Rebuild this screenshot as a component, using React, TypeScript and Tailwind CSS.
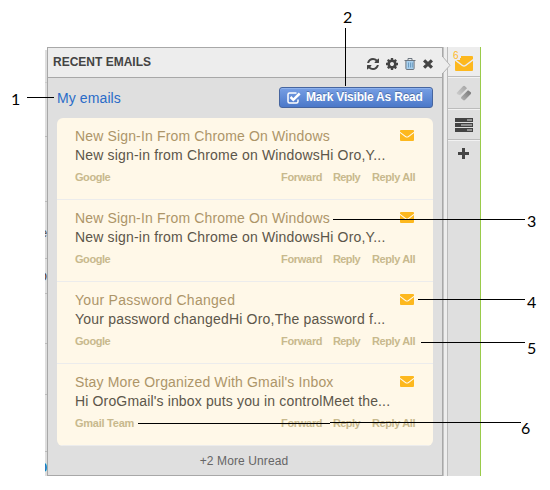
import type { ReactNode } from "react";

type Email = { subject: string; body: string; from: string; subjectSpacing: string; bodySpacing: string; fromSpacing: string };

const signIn: Email = {
  subject: "New Sign-In From Chrome On Windows",
  body: "New sign-in from Chrome on WindowsHi Oro,Y...",
  from: "Google",
  subjectSpacing: "tracking-[0.15px]",
  bodySpacing: "tracking-[0.18px]",
  fromSpacing: "tracking-[-0.45px]",
};

const emails: Email[] = [
  signIn,
  signIn,
  { subject: "Your Password Changed", body: "Your password changedHi Oro,The password f...", from: "Google", subjectSpacing: "tracking-[0.28px]", bodySpacing: "tracking-[0.2px]", fromSpacing: "tracking-[-0.45px]" },
  { subject: "Stay More Organized With Gmail's Inbox", body: "Hi OroGmail's inbox puts you in controlMeet the...", from: "Gmail Team", subjectSpacing: "tracking-[0.16px]", bodySpacing: "tracking-[0.15px]", fromSpacing: "tracking-[-0.25px]" },
];

function Envelope({ className }: { className: string }) {
  return (
    <svg className={className} viewBox="0 0 14 11" preserveAspectRatio="none" fill="#fdb81e">
      <path d="M1 0h12q1 0 1 1v.7L8.3 6q-1.3 1-2.600 0L0 1.700V1Q0 0 1 0z" />
      <path d="M0 3l5.200 3.900q1.800 1.300 3.600 0L14 3v7q0 1-1 1H1q-1 0-1-1z" />
    </svg>
  );
}

function RefreshIcon() {
  return (
    <svg className="h-[14px] w-[14px]" viewBox="0 0 1792 1792" fill="#444">
      <path d="M1639 1056q0 5-1 7-64 268-268 434.5t-478 166.5q-146 0-282.5-55t-243.5-157l-129 129q-19 19-45 19t-45-19-19-45v-448q0-26 19-45t45-19h448q26 0 45 19t19 45-19 45l-137 137q71 66 161 102t187 36q134 0 250-65t186-179q11-17 53-117 8-23 30-23h192q13 0 22.5 9.5t9.5 22.5zm25-800v448q0 26-19 45t-45 19h-448q-26 0-45-19t-19-45 19-45l138-138q-148-137-349-137-134 0-250 65t-186 179q-11 17-53 117-8 23-30 23h-199q-13 0-22.5-9.5t-9.5-22.5v-7q65-268 270-434.5t480-166.5q146 0 284 55.5t245 156.5l130-129q19-19 45-19t45 19 19 45z" />
    </svg>
  );
}

function GearIcon() {
  return (
    <svg className="h-[14px] w-[14px]" viewBox="0 0 1792 1792" fill="#444">
      <path d="M1152 896q0-106-75-181t-181-75-181 75-75 181 75 181 181 75 181-75 75-181zm512-109v222q0 12-8 23t-20 13l-185 28q-19 54-39 91 35 50 107 138 10 12 10 25t-9 23q-27 37-99 108t-94 71q-12 0-26-9l-138-108q-44 23-91 38-16 136-29 186-7 28-36 28h-222q-14 0-24.5-8.5t-11.5-21.5l-28-184q-49-16-90-37l-141 107q-10 9-25 9-14 0-25-11-126-114-165-168-7-10-7-23 0-12 8-23 15-21 51-66.5t54-70.5q-27-50-41-99l-183-27q-13-2-21-12.5t-8-23.5v-222q0-12 8-23t19-13l186-28q14-46 39-92-40-57-107-138-10-12-10-24 0-10 9-23 26-36 98.5-107.5t94.5-71.5q13 0 26 10l138 107q44-23 91-38 16-136 29-186 7-28 36-28h222q14 0 24.5 8.5t11.5 21.5l28 184q49 16 90 37l142-107q9-9 24-9 13 0 25 10 129 119 165 170 7 8 7 22 0 12-8 23-15 21-51 66.5t-54 70.5q26 50 41 98l183 28q13 2 21 12.5t8 23.5z" />
    </svg>
  );
}

function TrashIcon() {
  return (
    <svg className="h-[12px] w-[12px]" viewBox="0 0 12 12" fill="none">
      <path d="M2 2.500h8v9H2z" fill="#a9d0ee" />
      <path d="M.5 2.500h11M4 2.300V.5h4v1.800M1.900 3v7.500q0 1 1 1h6.200q1 0 1-1V3" stroke="#6c7680" />
      <path d="M4.500 4.500v5M6.500 4.500v5M8.300 4.500v5" stroke="#5d8fb8" strokeWidth=".8" />
    </svg>
  );
}

function CloseIcon() {
  return (
    <svg className="h-[10px] w-[10px]" viewBox="0 0 10 10" fill="none" stroke="#444" strokeWidth="3.200">
      <path d="M1.100 1.300l7.800 7.400M8.900 1.300L1.100 8.700" />
    </svg>
  );
}

function SideCell({ children, height }: { children: ReactNode; height: string }) {
  return <div className={`${height} flex w-8 items-center justify-center border-b border-[#bcbcbc] shadow-[0_1px_0_#f2f2f2]`}>{children}</div>;
}

export default function App() {
  return (
    <div className="relative h-[490px] w-[550px] overflow-hidden bg-white pt-[47px] pl-[45px] font-['Liberation_Sans',Arial,sans-serif]">
      <div className="flex h-[429px]">
        {/* edge of the page underneath the panel */}
        <div className="mt-[3px] flex w-[2px] flex-col overflow-hidden bg-[#dedede] text-[13px] leading-none">
          <div className="h-[33px] border-b border-[#ccc]" />
          <div className="h-[54px] border-b border-[#bbb]" />
          <div className="h-[65px] border-b border-[#bbb]" />
          <div className="h-[57px] border-b border-[#bbb] pt-[24px]"><span className="-ml-[5px] text-[#555]">e</span></div>
          <div className="h-[35px] border-b border-[#bbb] pt-[11px]"><span className="-ml-[8px] text-[#543]">O</span></div>
          <div className="h-[50px] border-b border-[#bbb]" />
          <div className="h-[51px] border-b border-[#bbb]" />
          <div className="h-[57px] border-b border-[#bbb]" />
          <div className="pt-[9px]"><span className="-ml-[5px] font-bold text-[#17b]">0</span></div>
        </div>

        <section className="flex w-[396px] flex-col border border-[#a8a8a8] bg-[#dfdfdf]">
          <header className="flex h-[30px] shrink-0 items-center border-b border-[#a8a8a8] bg-[#ededed] pr-[9px] pl-[5px]">
            <h1 className="-mt-[2px] text-[12px] leading-4 font-bold whitespace-nowrap text-[#444]">RECENT EMAILS</h1>
            <div className="ml-auto flex items-center pt-[3px]">
              <RefreshIcon />
              <div className="ml-[5px] flex"><GearIcon /></div>
              <div className="ml-[5px] flex"><TrashIcon /></div>
              <div className="ml-[7px] flex"><CloseIcon /></div>
            </div>
          </header>

          <div className="flex h-[40px] shrink-0 items-start justify-between pt-[9px] pr-[9px] pl-[9px]">
            <a className="mt-[2px] text-[14px] leading-[18px] tracking-[0.1px] whitespace-nowrap text-[#2a6cc8]">My emails</a>
            <button className="flex h-[21px] w-[154px] items-center rounded-[3px] border border-[#46659f] bg-linear-to-b from-[#779fe4] to-[#4b78c9] pl-[7px] text-[12px] leading-4 font-bold tracking-[-0.2px] whitespace-nowrap text-white shadow-[inset_0_1px_0_#8eb2ee]">
              <svg className="mt-px h-[12px] w-[14px]" viewBox="0 0 14 12" fill="none" stroke="#fff">
                <path d="M11 7.500v2q0 1.500-1.500 1.500h-7Q1 11 1 9.500v-7Q1 1 2.500 1h7" strokeWidth="1.500" />
                <path d="M3.500 5l2.800 2.800L12.700 1.500" strokeWidth="2.500" />
              </svg>
              <span className="-mt-[2px] ml-[5px] [text-shadow:0_-1px_0_rgba(0,0,0,0.25)]">Mark Visible As Read</span>
            </button>
          </div>

          <div className="mr-[9px] ml-[9px] h-[328px] shrink-0 overflow-hidden rounded-[6px] bg-[#fff8e8]">
            {emails.map((mail, i) => (
              <article key={i} className="h-[82px] border-b border-[#ececec] pt-[9px] pr-[18px] pl-[18px]">
                <div className="flex h-[19px] items-start justify-between whitespace-nowrap">
                  <h2 className={`text-[14px] leading-[18px] text-[#ad9568] ${mail.subjectSpacing}`}>{mail.subject}</h2>
                  <Envelope className="mt-[3px] mr-px h-[11px] w-[14px]" />
                </div>
                <p className={`h-[19px] text-[14px] leading-[18px] whitespace-nowrap text-[#5c564a] ${mail.bodySpacing}`}>{mail.body}</p>
                <div className="mt-[5px] flex text-[11px] leading-[14px] font-bold whitespace-nowrap text-[#c8b98d]">
                  <span className={mail.fromSpacing}>{mail.from}</span>
                  <span className="ml-auto w-[52px] tracking-[-0.3px]">Forward</span>
                  <span className="w-[39px] tracking-[-0.6px]">Reply</span>
                  <span className="w-[43px] tracking-[-0.4px]">Reply All</span>
                </div>
              </article>
            ))}
          </div>
          <div className="pt-[7px] pr-[2px] text-center text-[12px] leading-4 tracking-[0.1px] text-[#666]">+2 More Unread</div>
        </section>

        <div className="w-[4px] border-l border-[#c4c4c4] bg-[#ededed]" />
        <aside className="flex w-[34px] flex-col border-r border-l border-r-[#9acb4a] border-l-[#bbb] bg-[#dfdfdf]">
          <div className="relative flex h-[30px] w-8 items-center justify-center border-b border-[#bcbcbc] bg-[#ededed] shadow-[0_1px_0_#f2f2f2]">
            <svg className="mt-[4px] h-[15px] w-[18px]" viewBox="0 0 18 15" fill="#fdb81e">
              <path d="M6 0h11q1 0 1 1v2l-8 6q-1 .7-2 0L0 3V2h6z" />
              <path d="M0 4.800l7 5.300q2 1.400 4 0l7-5.300V14q0 1-1 1H1q-1 0-1-1z" />
            </svg>
            <span className="absolute top-[4px] left-[4px] bg-[#ededed] pr-px pl-px text-[10px] leading-[9px] text-[#fdb81e]">6</span>
          </div>
          <SideCell height="h-[32px]">
            <svg className="mt-[1px] h-[16px] w-[16px]" viewBox="0 0 16 16" fill="none">
              <defs>
                <linearGradient id="lightBar" x1="0" y1="1" x2="1" y2="0">
                  <stop offset="0" stopColor="#cfcfcf" />
                  <stop offset="1" stopColor="#a2a2a2" />
                </linearGradient>
                <linearGradient id="darkBar" x1="0" y1="1" x2="1" y2="0">
                  <stop offset="0" stopColor="#b4b4b4" />
                  <stop offset="1" stopColor="#747474" />
                </linearGradient>
              </defs>
              <path d="M1 7.500L7 1.200Q8 .4 9 1.200L11 3.200L4 10.300L1.300 9.300Q.3 8.500 1 7.500z" fill="url(#lightBar)" />
              <path d="M5 12.300L12 5.200L14.800 7.200Q15.500 8 14.800 9L9 15Q8 15.800 7 15L5 13.300z" fill="url(#darkBar)" />
            </svg>
          </SideCell>
          <SideCell height="h-[31px]">
            <svg className="mt-[1px] h-[14px] w-[18px]" viewBox="0 0 18 14" fill="#444">
              <path d="M0 0h18v4H0zM0 5h18v4H0zM0 10h18v4H0z" />
              <path d="M12 1.400h5v1.200h-5zM6 6.400h11v1.200H6zM12 11.400h5v1.200h-5z" fill="#ddd" />
            </svg>
          </SideCell>
          <div className="flex h-[27px] w-[31px] items-center justify-center">
            <svg className="h-[11px] w-[11px]" viewBox="0 0 11 11" fill="#444"><path d="M4 0h3v4h4v3H7v4H4V7H0V4h4z" /></svg>
          </div>
        </aside>
      </div>

      {/* pointer from the panel to the active sidebar widget */}
      <svg className="absolute top-[57px] left-[442px] h-[17px] w-[10px]" viewBox="0 0 10 17">
        <path d="M0 0h1l7 8.300L1 16H0z" fill="#ededed" />
        <path d="M1 0l7 8.300L1 16" fill="none" stroke="#b4b4b4" />
      </svg>

      {/* callouts */}
      <svg className="absolute inset-0 h-[490px] w-[550px]" shapeRendering="crispEdges" stroke="#000">
        <path d="M27 97.500h27M345.500 28v58M333 219.500h192M418 299.500h107M421 342.500h104M138 423.500h192M330 422.500h191" />
      </svg>
      <div className="absolute inset-0 font-['Lato','Liberation_Sans',sans-serif] text-[16px] leading-[18px] text-black">
        <span className="absolute top-[90px] left-[11px]">1</span>
        <span className="absolute top-[8px] left-[343px]">2</span>
        <span className="absolute top-[212px] left-[527px]">3</span>
        <span className="absolute top-[293px] left-[527px]">4</span>
        <span className="absolute top-[339px] left-[527px]">5</span>
        <span className="absolute top-[419px] left-[521px]">6</span>
      </div>
    </div>
  );
}
